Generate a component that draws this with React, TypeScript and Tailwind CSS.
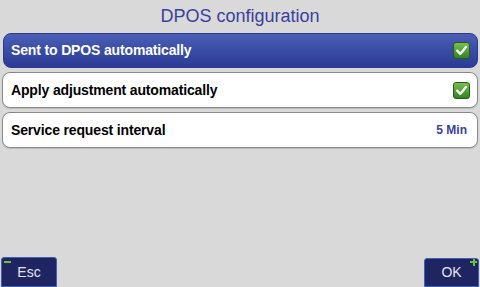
import React from "react";

const rows = [
  { label: "Sent to DPOS automatically", kind: "check", active: true },
  { label: "Apply adjustment automatically", kind: "check", active: false },
  { label: "Service request interval", kind: "value", value: "5 Min", active: false },
];

const CheckBox = () => (
  <div className="w-[17px] h-[17px] rounded-[3px] border border-[#2a5a1a] bg-gradient-to-b from-[#78c050] to-[#2e8424] flex items-center justify-center">
    <svg width="13" height="13" viewBox="0 0 13 13">
      <path d="M2.2 6.6 L5.4 9.8 L11 3" fill="none" stroke="#ffffff" strokeWidth="2.4" strokeLinecap="round" strokeLinejoin="round" />
    </svg>
  </div>
);

export default function App() {
  return (
    <div className="w-[480px] h-[287px] bg-[#d9d9d9] flex flex-col overflow-hidden font-['Liberation_Sans',Arial,sans-serif]">
      {/* TITLE */}
      <div className="h-[33px] flex items-center justify-center text-[18px] text-[#3a3f9e] pb-[1px]">
        DPOS configuration
      </div>

      {/* ROWS */}
      <div className="flex flex-col gap-[4px] px-[2px]">
        {rows.map((row, idx) => (
          <div
            key={idx}
            className={
              row.active
                ? "h-[35px] ml-[1px] rounded-[8px] border border-[#2d3b8c] bg-gradient-to-b from-[#4a5fb5] to-[#2b3a96] flex items-center justify-between pl-[7px] pr-[7px] text-white"
                : "h-[36px] rounded-[8px] border border-[#8a8a8a] bg-white flex items-center justify-between pl-[8px] pr-[7px] text-black shadow-[0_1px_1px_rgba(0,0,0,0.15)]"
            }
          >
            <span className="text-[14px] font-bold tracking-[-0.15px]">{row.label}</span>
            {row.kind === "check" ? (
              <CheckBox />
            ) : (
              <span className="text-[12px] font-bold text-[#3a3f9e] pr-[3px]">{row.value}</span>
            )}
          </div>
        ))}
      </div>

      <div className="flex-1" />

      {/* BOTTOM BUTTONS */}
      <div className="flex justify-between items-end px-[1px]">
        <div className="relative w-[56px] h-[30px] rounded-t-[3px] border border-[#4060b0] bg-[#1f2462] flex items-center justify-center text-[14px] text-[#e4e4ee]">
          <div className="absolute left-[2px] top-[3px] w-[7px] h-[2px] bg-[#6cc040]" />
          Esc
        </div>
        <div className="relative w-[55px] h-[29px] rounded-t-[3px] border border-[#4060b0] bg-[#1f2462] flex items-center justify-center text-[14px] text-[#e4e4ee]">
          <div className="absolute right-[1px] top-[2px] w-[7px] h-[2px] bg-[#6cc040]" />
          <div className="absolute right-[3.5px] top-[-0.5px] w-[2px] h-[7px] bg-[#6cc040]" />
          OK
        </div>
      </div>
    </div>
  );
}
